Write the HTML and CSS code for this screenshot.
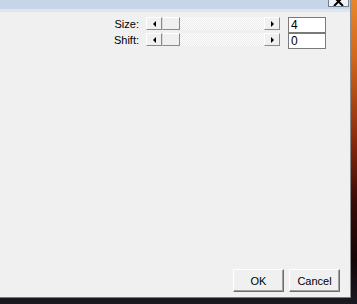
FILE: index.html
```html
<!DOCTYPE html>
<html lang="en">
<head>
  <meta charset="UTF-8">
  <title>Settings</title>
  <link rel="stylesheet" href="styles.css">
</head>
<body>
  <div class="window">
    <div class="titlebar">
      <div class="close">
        <svg width="12" height="6" viewBox="0 0 12 6">
          <path d="M1 -3 L10 6 M10 -3 L1 6" stroke="#000" stroke-width="2" fill="none"/>
        </svg>
      </div>
    </div>
    <div class="strip"></div>
    <div class="content">
      <div class="rows">
        <div class="row">
          <span class="label">Size:</span>
          <div class="scroll">
            <span class="sbtn"><i class="arrow left"></i></span>
            <span class="thumb"></span>
            <span class="track"></span>
            <span class="sbtn"><i class="arrow right"></i></span>
          </div>
          <div class="edit">4</div>
        </div>
        <div class="row">
          <span class="label">Shift:</span>
          <div class="scroll">
            <span class="sbtn"><i class="arrow left"></i></span>
            <span class="thumb"></span>
            <span class="track"></span>
            <span class="sbtn"><i class="arrow right"></i></span>
          </div>
          <div class="edit">0</div>
        </div>
      </div>
      <div class="actions">
        <button class="btn">OK</button>
        <button class="btn">Cancel</button>
      </div>
    </div>
  </div>
</body>
</html>
```

FILE: styles.css
```css
body {
  margin: 0;
  width: 357px;
  height: 304px;
  overflow: hidden;
  font-family: 'Liberation Sans', Arial, sans-serif;
  font-size: 11px;
  color: #000;
  background: linear-gradient(to bottom, #e9862a 0, #d0661a 60px, #8a2a0c 140px, #3a0c06 200px, #140606 260px, #1a1a22 304px);
}
.window {
  width: 351px;
  height: 298px;
  box-sizing: border-box;
  display: flex;
  flex-direction: column;
  border-right: 1px solid #8c8c8c;
  border-bottom: 1px solid #7a7a7a;
  background: #f0f0f0;
}
.titlebar {
  height: 9px;
  background: #c6d6e8;
  display: flex;
  justify-content: flex-end;
  padding-right: 1px;
}
.close {
  width: 19px;
  height: 6px;
  overflow: hidden;
  display: flex;
  justify-content: center;
  align-items: flex-end;
  background: #eef2f7;
  border: 1px solid #6f7f91;
  border-top: none;
}
.close svg {
  display: block;
}
.strip {
  height: 3px;
  background: #dde6f0;
}
.content {
  flex: 1;
  display: flex;
  flex-direction: column;
  padding-top: 5px;
}
.row {
  display: flex;
  align-items: flex-start;
  height: 16px;
}
.label {
  width: 139px;
  text-align: right;
  line-height: 14px;
}
.scroll {
  margin-left: 7px;
  width: 134px;
  height: 13px;
  display: flex;
}
.sbtn,
.thumb {
  width: 16px;
  height: 13px;
  box-sizing: border-box;
  background: #f0f0f0;
  border: 1px solid;
  border-color: #ffffff #8a8a8a #8a8a8a #ffffff;
  display: flex;
  align-items: center;
  justify-content: center;
}
.thumb {
  width: 18px;
  border-left-color: #d8d8d8;
}
.track {
  flex: 1;
  background: repeating-conic-gradient(#eaeaea 0 25%, #ffffff 0 50%) 0 0 / 2px 2px;
}
.arrow {
  width: 0;
  height: 0;
  border-top: 3px solid transparent;
  border-bottom: 3px solid transparent;
}
.arrow.left {
  border-right: 3px solid #000;
}
.arrow.right {
  border-left: 3px solid #000;
}
.edit {
  margin-left: 8px;
  width: 38px;
  height: 16px;
  box-sizing: border-box;
  border: 1px solid #7a7a7a;
  background: #fff;
  padding-left: 2px;
  font-size: 12px;
  line-height: 14px;
}
.actions {
  margin-top: auto;
  display: flex;
  justify-content: flex-end;
  gap: 5px;
  padding: 0 10px 5px 0;
}
.btn {
  width: 51px;
  height: 23px;
  padding: 0;
  font-family: 'Liberation Sans', Arial, sans-serif;
  font-size: 11px;
  color: #000;
  background: #f0f0f0;
  border: 1px solid;
  border-color: #ffffff #6e6e6e #6e6e6e #ffffff;
  box-shadow: inset -1px -1px 0 #a0a0a0;
}
```
